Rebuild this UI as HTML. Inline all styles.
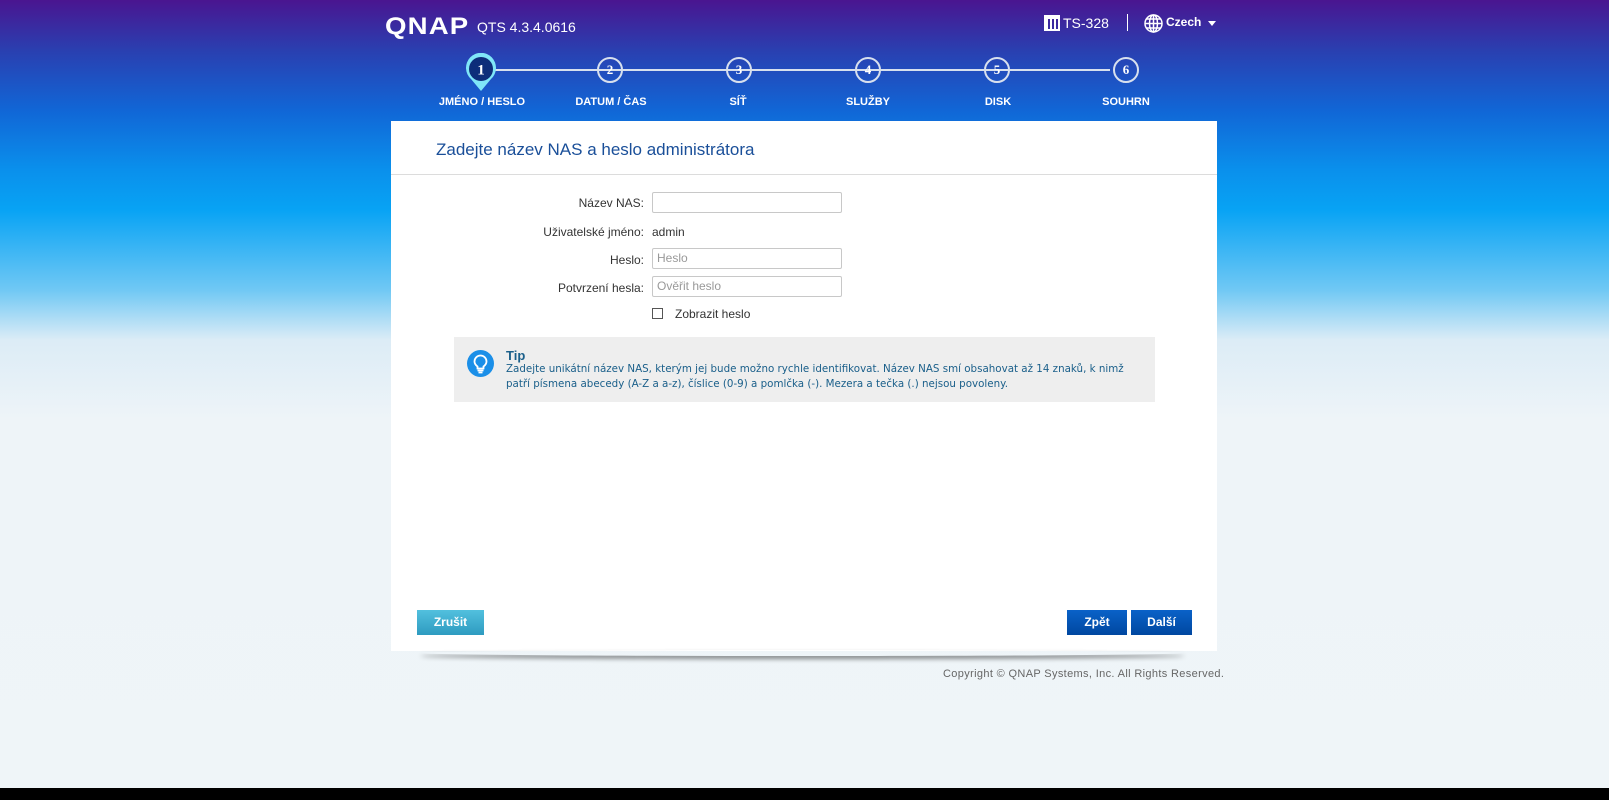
<!DOCTYPE html>
<html><head><meta charset="utf-8"><style>
*{box-sizing:border-box;margin:0;padding:0}
body{width:1609px;height:800px;overflow:hidden;font-family:"Liberation Sans","DejaVu Sans",sans-serif;font-size:12px;position:relative;
background:linear-gradient(180deg,#4a1590 0px,#2a3fb0 50px,#1166d6 110px,#0a90ec 170px,#08a3f4 210px,#70c8f4 290px,#dcecf6 340px,#eef4f8 420px,#eff5f8 800px);}
.abs{position:absolute}
.logo{left:385px;top:13px;color:#fff;font:900 24px "Liberation Sans",sans-serif;letter-spacing:1px;transform:scaleX(1.15);transform-origin:left}
.ver{left:477px;top:19px;color:#fff;font-size:14px}
.steps .c{position:absolute;width:26px;height:26px;border:2px solid #d8e0ee;border-radius:50%;color:#fff;font:bold 13px "Liberation Serif",serif;text-align:center;line-height:22px;top:57px}
.steps .l{position:absolute;top:96px;color:#fff;font-weight:bold;font-size:11px;width:140px;text-align:center}
.line{top:69px;left:495px;width:615px;height:2px;background:#d8e0ee}
.card{left:391px;top:121px;width:826px;height:530px;background:#fff}
.title{left:436px;top:140px;color:#1a4f99;font-size:17px}
.hr{left:391px;top:174px;width:826px;height:1px;background:#dcdcdc}
.lab{width:250px;text-align:right;left:394px;color:#333}
.inp{left:652px;width:190px;height:21px;border:1px solid #c8c8c8;border-radius:2px;color:#999;padding-left:4px;line-height:19px}
.tip{left:454px;top:337px;width:701px;height:65px;background:#eeeeee}
.btn{height:25px;color:#fff;font-weight:bold;text-align:center;line-height:25px;font-size:12px}
</style></head><body>
<div class="abs logo">QNAP</div>
<div class="abs ver">QTS 4.3.4.0616</div>
<div class="abs" style="left:1044px;top:15px;width:16px;height:16px;border:2px solid #fff;border-top-width:4px;background:repeating-linear-gradient(90deg,#fff 0 2px,transparent 2px 4px)"></div>
<div class="abs" style="left:1063px;top:15px;color:#fff;font-size:14px">TS-328</div>
<div class="abs" style="left:1127px;top:14px;width:1px;height:17px;background:#fff"></div>
<svg class="abs" style="left:1144px;top:14px" width="19" height="19" viewBox="0 0 19 19" fill="none" stroke="#fff" stroke-width="1.5"><circle cx="9.5" cy="9.5" r="8.5"/><ellipse cx="9.5" cy="9.5" rx="4" ry="8.5"/><path d="M1 9.5h17M9.5 1v17M2.5 5h14M2.5 14h14"/></svg>
<div class="abs" style="left:1166px;top:15px;color:#fff;font-size:12px;font-weight:bold">Czech</div>
<div class="abs" style="left:1208px;top:21px;border:4px solid transparent;border-top:5px solid #fff"></div>
<div class="steps">
<div class="abs line"></div>
<svg class="abs" style="left:464px;top:53px" width="34" height="40" viewBox="0 0 34 40"><path d="M17 38 L7 26 A15 15 0 1 1 27 26 Z" fill="#7fe6f8"/><circle cx="17" cy="16" r="12" fill="#0d2d7a"/><text x="17" y="21.5" text-anchor="middle" fill="#fff" font-family="Liberation Serif" font-weight="bold" font-size="15">1</text></svg>
<div class="c" style="left:597px">2</div>
<div class="c" style="left:726px">3</div>
<div class="c" style="left:855px">4</div>
<div class="c" style="left:984px">5</div>
<div class="c" style="left:1113px">6</div>
<div class="l" style="left:412px">JMÉNO / HESLO</div>
<div class="l" style="left:541px">DATUM / ČAS</div>
<div class="l" style="left:668px">SÍŤ</div>
<div class="l" style="left:798px">SLUŽBY</div>
<div class="l" style="left:928px">DISK</div>
<div class="l" style="left:1056px">SOUHRN</div>
</div>
<div class="abs card"></div>
<div class="abs" style="left:420px;top:650px;width:765px;height:6px;border-radius:50%;box-shadow:0 3px 5px rgba(0,0,0,.45)"></div>
<div class="abs title">Zadejte název NAS a heslo administrátora</div>
<div class="abs hr"></div>
<div class="abs lab" style="top:196px">Název NAS:</div>
<div class="abs inp" style="top:192px"></div>
<div class="abs lab" style="top:225px">Uživatelské jméno:</div>
<div class="abs" style="left:652px;top:225px;color:#333">admin</div>
<div class="abs lab" style="top:253px">Heslo:</div>
<div class="abs inp" style="top:248px">Heslo</div>
<div class="abs lab" style="top:281px">Potvrzení hesla:</div>
<div class="abs inp" style="top:276px">Ověřit heslo</div>
<div class="abs" style="left:652px;top:308px;width:11px;height:11px;border:1px solid #555"></div>
<div class="abs" style="left:675px;top:307px;color:#333">Zobrazit heslo</div>
<div class="abs tip"></div>
<div class="abs" style="left:467px;top:350px;width:27px;height:27px;border-radius:50%;background:#1b8fe8"></div>
<svg class="abs" style="left:467px;top:350px" width="27" height="27" viewBox="0 0 27 27" fill="none" stroke="#fff" stroke-width="1.8"><path d="M10.5 16.5c-2-1.5-3-3-3-5a6 6 0 0 1 12 0c0 2-1 3.5-3 5v2h-6z"/><path d="M10.5 20.5h6M11.5 22.5h4"/></svg>
<div class="abs" style="left:506px;top:348px;color:#1a5f8a;font-weight:bold;font-size:13px">Tip</div>
<div class="abs" style="left:506px;top:362px;width:680px;white-space:nowrap;color:#1a5f8a;font-family:'DejaVu Sans',sans-serif;font-size:10.3px;line-height:15px">Zadejte unikátní název NAS, kterým jej bude možno rychle identifikovat. Název NAS smí obsahovat až 14 znaků, k nimž<br>patří písmena abecedy (A-Z a a-z), číslice (0-9) a pomlčka (-). Mezera a tečka (.) nejsou povoleny.</div>
<div class="abs btn" style="left:417px;top:610px;width:67px;background:linear-gradient(#52c0de,#2e9bc0)">Zrušit</div>
<div class="abs btn" style="left:1067px;top:610px;width:60px;background:linear-gradient(#0a62c8,#0047a0)">Zpět</div>
<div class="abs btn" style="left:1131px;top:610px;width:61px;background:linear-gradient(#0a62c8,#0047a0)">Další</div>
<div class="abs" style="left:943px;top:668px;color:#666;font-size:11px;letter-spacing:0.35px">Copyright © QNAP Systems, Inc. All Rights Reserved.</div>
<div class="abs" style="left:0;top:788px;width:1609px;height:12px;background:#000"></div>
</body></html>
